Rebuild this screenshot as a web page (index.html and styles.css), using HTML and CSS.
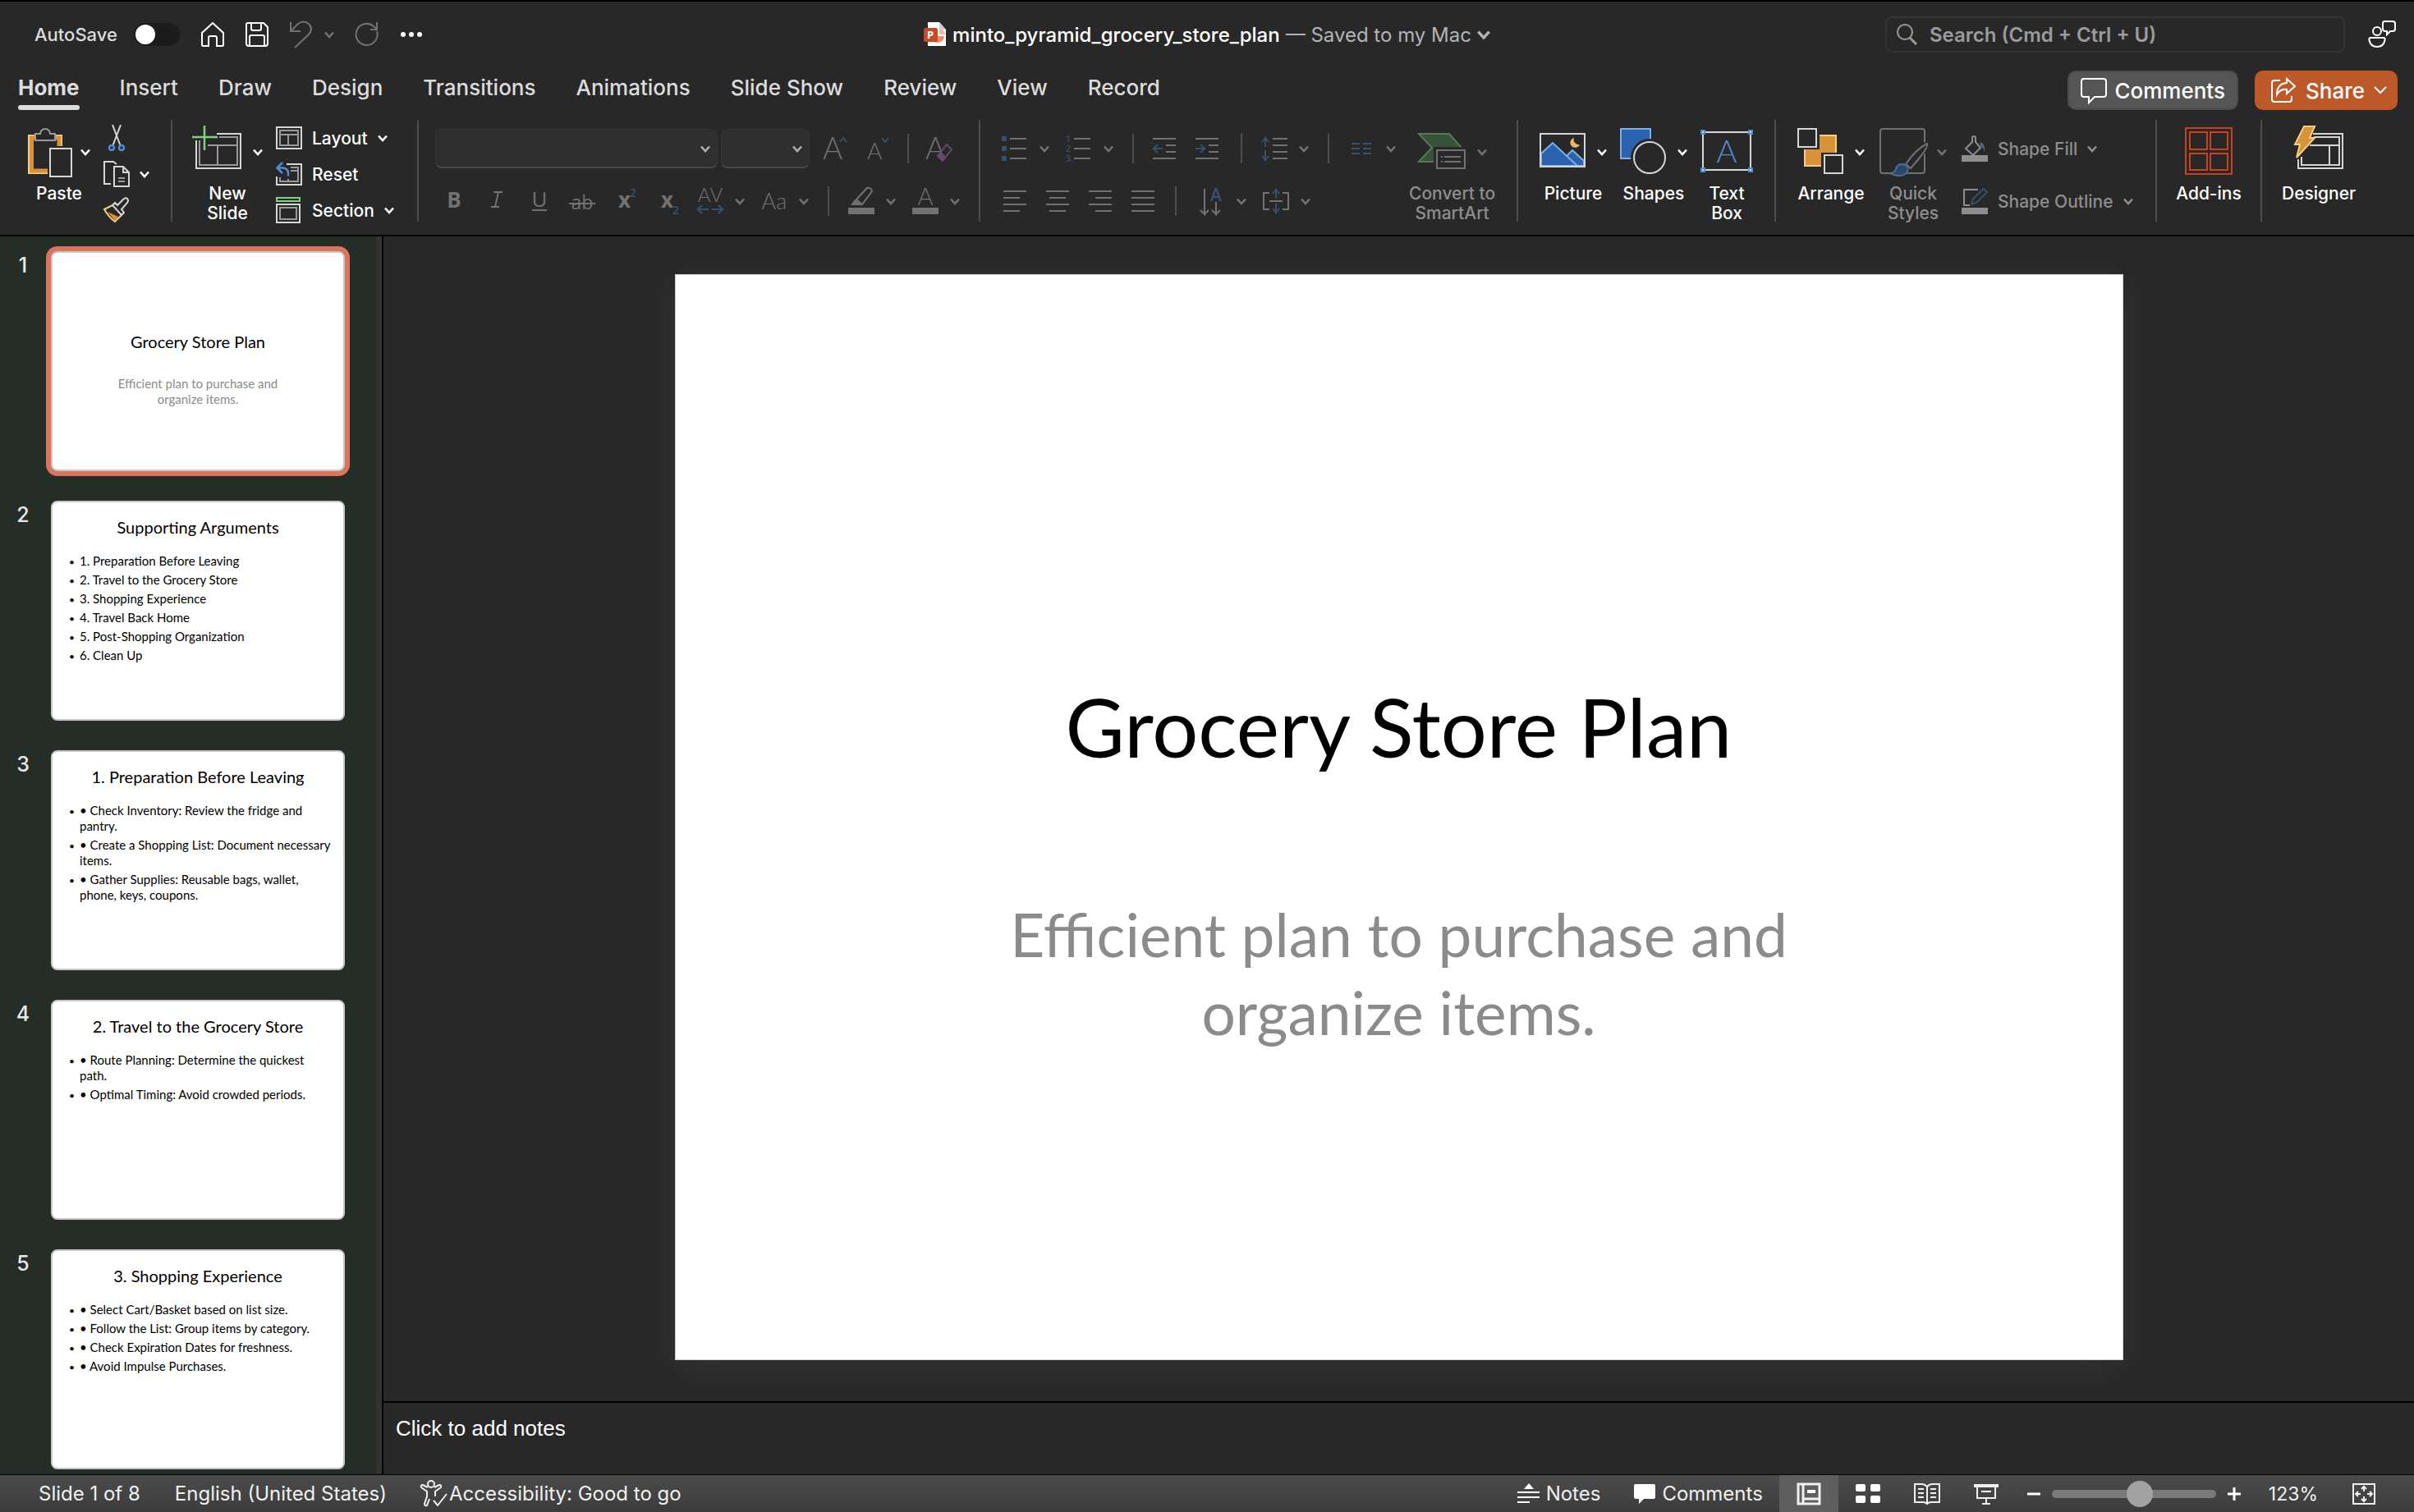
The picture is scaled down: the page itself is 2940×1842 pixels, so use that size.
FILE: index.html
```html
<!DOCTYPE html>
<html lang="en">
<head>
    <meta charset="UTF-8">
    <title>minto_pyramid_grocery_store_plan</title>
    <link rel="stylesheet" href="styles.css">
</head>
<body>

    <svg class="sprite" aria-hidden="true">
        <symbol id="chev" viewBox="0 0 12 12"><path d="M1 3.5 6 9l5-5.5" fill="none" stroke="currentColor" stroke-width="2.6"/></symbol>
    </svg>

    <header class="titlebar">
        <div class="quick">
            <label class="autosave">AutoSave <input type="checkbox" class="toggle"></label>
            <button class="plain" aria-label="Home"><svg width="28" height="32" viewBox="0 0 28 32" class="line"><path d="M14 2 27 14v14.500q0 1.500-1.500 1.500H19V20q0-2-2-2h-6q-2 0-2 2v10H2.500Q1 30 1 28.500V14z"/></svg></button>
            <button class="plain" aria-label="Save"><svg width="28" height="30" viewBox="0 0 28 30" class="line"><path d="M3 1h19l5 5v20q0 3-3 3H4q-3 0-3-3V3q0-2 2-2zM7 1v7q0 2 2 2h8q2 0 2-2V1M5 29V18q0-2 2-2h14q2 0 2 2v11"/></svg></button>
            <div class="split dim">
                <button class="plain" aria-label="Undo"><svg width="28" height="34" viewBox="0 0 28 34" class="line"><path d="M1 2v11h12M1 13 10 4q7-5 13 0 6 6 0 13L6 33"/></svg></button>
                <button class="plain" aria-label="Undo list"><svg width="12" height="12"><use href="#chev"/></svg></button>
            </div>
            <button class="plain dim" aria-label="Redo"><svg width="28" height="32" viewBox="0 0 28 32" class="line"><path d="M26 12a13 13 0 1 1-4-6l4 3M26 1v9h-8"/></svg></button>
            <button class="plain" aria-label="More"><svg width="28" height="8" viewBox="0 0 28 8" fill="#fff"><circle cx="4" cy="4" r="3"/><circle cx="14" cy="4" r="3"/><circle cx="24" cy="4" r="3"/></svg></button>
        </div>
        <div class="doc-title">
            <svg width="28" height="32" viewBox="0 0 28 32"><path d="M5 1h14l8 9v20H5z" fill="#fff"/><path d="M19 1v9h8z" fill="#ccc"/><path d="M17 10a8 8 0 1 0 8 8h-8z" fill="#e98a6b"/><path d="M19 9a7 7 0 0 1 7 7h-7z" fill="#f6bda6"/><rect y="8" width="17" height="17" rx="2" fill="#c44a28"/><text x="4" y="21" font-size="13" font-weight="700" class="badge">P</text></svg>
            <h1>minto_pyramid_grocery_store_plan</h1>
            <span class="saved">— Saved to my Mac</span>
            <svg class="saved" width="16" height="16"><use href="#chev"/></svg>
        </div>
        <div class="title-right">
            <label class="search">
                <svg width="28" height="28" viewBox="0 0 28 28" class="line"><circle cx="12" cy="11" r="9"/><path d="m18 18 8 8" stroke-width="3"/></svg>
                <input type="text" placeholder="Search (Cmd + Ctrl + U)" aria-label="Search">
            </label>
            <button class="plain" aria-label="Presence"><svg width="34" height="34" viewBox="0 0 34 34" class="line"><circle cx="11" cy="13" r="5"/><path d="M3 21h16q2 0 1.500 3-1.500 8-9.500 8t-9.500-8Q1 21 3 21zM20 1h10q3 0 3 3v6q0 3-3 3h-3l-4 4v-4h-2q-3 0-3-3V4q0-3 2-3z"/></svg></button>
        </div>
    </header>

    <div class="tab-row">
        <nav class="tabs">
            <a href="#" class="tab active">Home</a>
            <a href="#" class="tab">Insert</a>
            <a href="#" class="tab">Draw</a>
            <a href="#" class="tab">Design</a>
            <a href="#" class="tab">Transitions</a>
            <a href="#" class="tab">Animations</a>
            <a href="#" class="tab">Slide Show</a>
            <a href="#" class="tab">Review</a>
            <a href="#" class="tab">View</a>
            <a href="#" class="tab">Record</a>
        </nav>
        <div class="actions">
            <button class="btn-comments"><svg width="32" height="32" viewBox="0 0 32 32" class="line"><path d="M4 2h24q3 0 3 3v16q0 3-3 3H17l-7 7v-7H4q-3 0-3-3V5q0-3 3-3z"/></svg>Comments</button>
            <button class="btn-share"><svg width="32" height="32" viewBox="0 0 32 32" class="line"><path d="M12 4H5Q2 4 2 7v20q0 3 3 3h18q3 0 3-3v-4M20 2l10 9-10 9v-5q-8-1-12 6 0-13 12-14z"/></svg>Share <svg width="16" height="16" viewBox="0 0 16 16" class="line"><path d="m1 4 7 7 7-7"/></svg></button>
        </div>
    </div>

    <div class="ribbon">
        <!-- Clipboard -->
        <section class="group g-clipboard">
            <button class="tool">
                <span class="face">
                    <svg width="54" height="64" viewBox="0 0 54 64" fill="none"><path d="M8 12H1v46h23M34 12h7v13" stroke="#f3cf7f" stroke-width="2"/><path d="M8 15H4.500v40H24M34 15h4v10" stroke="#d8923a" stroke-width="5"/><path d="M9 10h6a6 6 0 0 1 12 0h6v8H9z" stroke="#9a9a9a" stroke-width="2" fill="#282828"/><path d="M27 28h26v34H27z" stroke="#d6d6d6" stroke-width="2"/></svg>
                    <svg width="12" height="12"><use href="#chev"/></svg>
                </span>
                <span class="label">Paste</span>
            </button>
            <div class="minis">
                <button class="mini" aria-label="Cut"><svg width="32" height="32" viewBox="0 0 32 32" fill="none"><path d="m11 0 9.500 25M21 0l-9.500 25" stroke="#d6d6d6" stroke-width="2"/><circle cx="10" cy="28" r="3" stroke="#4f8fd0" stroke-width="2.500"/><circle cx="22" cy="28" r="3" stroke="#4f8fd0" stroke-width="2.500"/></svg></button>
                <button class="mini" aria-label="Copy"><svg width="32" height="32" viewBox="0 0 32 32" fill="none" stroke="#d6d6d6" stroke-width="2"><path d="M9 28H1V1h11l4 3M13 7h11l7 7v17H13zM24 7v7h7"/><path d="M18 21h8M18 25h8" stroke="#9a9a9a"/></svg><svg width="12" height="12"><use href="#chev"/></svg></button>
                <button class="mini" aria-label="Format painter"><svg width="32" height="32" viewBox="0 0 32 32" fill="none" stroke-width="2"><path d="M11 10 1 15q5 9 13 15l8-8" stroke="#f3cf7f"/><path d="m5 18 13 6-4 5z" fill="#d8923a"/><path d="m14 7-3 3 11 12 3-3-3-4 7-8q2-3 0-5t-5 1l-7 7z" stroke="#d6d6d6"/></svg></button>
            </div>
        </section>

        <!-- Slides -->
        <section class="group g-slides">
            <button class="tool">
                <span class="face">
                    <svg width="64" height="64" viewBox="0 0 64 64" fill="none" stroke-width="2"><path d="M30 10h29v42H5V18" stroke="#d6d6d6"/><path d="M33 14h22v34H9V18M19 24h36M31 24v24" stroke="#9a9a9a"/><path d="M0 14h31M15 0v30" stroke="#7fd27f" stroke-width="2.500"/></svg>
                    <svg width="12" height="12"><use href="#chev"/></svg>
                </span>
                <span class="label">New<br>Slide</span>
            </button>
            <div class="minis">
                <button class="mini"><svg width="32" height="28" viewBox="0 0 32 28" fill="none" stroke-width="2"><path d="M1 1h30v26H1z" stroke="#d6d6d6"/><path d="M5 5h22v18H5zM5 10h22M15 10v13" stroke="#9a9a9a"/></svg>Layout<svg width="12" height="12"><use href="#chev"/></svg></button>
                <button class="mini"><svg width="32" height="28" viewBox="0 0 32 28" fill="none" stroke-width="2"><path d="M13 2h18v25H1V17" stroke="#d6d6d6"/><path d="M18 6h9v17H5v-5M18 10h9M15 20v3" stroke="#9a9a9a"/><path d="M8 0 1.500 6.500 8 13M2 6.500h7q7 1 6 10" stroke="#4f8fd0" stroke-width="2.500"/></svg>Reset</button>
                <button class="mini"><svg width="32" height="32" viewBox="0 0 32 32" fill="none" stroke-width="2"><path d="M1 1h28v4H1z" stroke="#7fd27f"/><path d="M1 9h28v22H1z" stroke="#d6d6d6"/><path d="M5 13h20v14H5z" stroke="#9a9a9a"/></svg>Section<svg width="12" height="12"><use href="#chev"/></svg></button>
            </div>
        </section>

        <!-- Font -->
        <section class="group g-font dim">
            <div class="row">
                <div class="font-pick">
                    <div class="pick pick-font"><select aria-label="Font"><option></option></select><svg width="12" height="12"><use href="#chev"/></svg></div>
                    <div class="pick pick-size"><select aria-label="Font size"><option></option></select><svg width="12" height="12"><use href="#chev"/></svg></div>
                </div>
                <button class="plain" aria-label="Grow font"><svg width="36" height="36" viewBox="0 0 36 36"><text x="0" y="31" font-size="37" class="thin">A</text><path d="m21 10 4-5 4 5" class="blue"/></svg></button>
                <button class="plain" aria-label="Shrink font"><svg width="32" height="36" viewBox="0 0 32 36"><text x="2" y="31" font-size="28" class="thin">A</text><path d="m20 5 4 5 4-5" class="blue"/></svg></button>
                <span class="bar"></span>
                <button class="plain" aria-label="Clear formatting"><svg width="36" height="36" viewBox="0 0 36 36"><text x="1" y="31" font-size="37" class="thin">A</text><path d="m16 27 11-14 6 6-11 14z" fill="#282828" stroke="#6b4670" stroke-width="2"/><path d="m16 27 4-5 6 6-4 5z" fill="#6b4670"/></svg></button>
            </div>
            <div class="row">
                <button class="plain" aria-label="Bold"><svg width="32" height="34" viewBox="0 0 32 34"><text x="16" y="25" font-size="26" font-weight="700" text-anchor="middle">B</text></svg></button>
                <button class="plain" aria-label="Italic"><svg width="32" height="34" viewBox="0 0 32 34" class="line"><path d="M12 6h11M9 24h10M18 6l-4 18"/></svg></button>
                <button class="plain" aria-label="Underline"><svg width="32" height="34" viewBox="0 0 32 34"><text x="16" y="24" font-size="26" text-anchor="middle">U</text><path d="M7 28h18" class="ink"/></svg></button>
                <button class="plain" aria-label="Strikethrough"><svg width="32" height="34" viewBox="0 0 32 34"><text x="16" y="27" font-size="23" text-anchor="middle">ab</text><path d="M0 20h32" class="ink"/></svg></button>
                <button class="plain" aria-label="Superscript"><svg width="32" height="34" viewBox="0 0 32 34"><text x="8" y="25" font-size="26" font-weight="700">x</text><text x="22" y="12" font-size="14" class="bluetext">2</text></svg></button>
                <button class="plain" aria-label="Subscript"><svg width="32" height="34" viewBox="0 0 32 34"><text x="8" y="25" font-size="26" font-weight="700">x</text><text x="22" y="33" font-size="14" class="bluetext">2</text></svg></button>
                <button class="split" aria-label="Character spacing"><svg width="32" height="34" viewBox="0 0 32 34"><text x="16" y="18" font-size="24" text-anchor="middle" class="thin">AV</text><path d="M14 27H1l5-5m-5 5 5 5M18 27h13l-5-5m5 5-5 5" class="blue"/></svg><svg width="12" height="12"><use href="#chev"/></svg></button>
                <button class="split" aria-label="Change case"><svg width="32" height="34" viewBox="0 0 32 34"><text x="16" y="27" font-size="27" text-anchor="middle" class="thin">Aa</text></svg><svg width="12" height="12"><use href="#chev"/></svg></button>
                <span class="bar"></span>
                <button class="split" aria-label="Highlight"><svg width="32" height="34" viewBox="0 0 32 34"><path d="m10 15 13-14q5-1 6 4L17 21z" fill="none" class="ink"/><path d="m8 15 9 7-6 0H3z" fill="currentColor"/><path d="M0 25h32v8H0z" fill="currentColor"/></svg><svg width="12" height="12"><use href="#chev"/></svg></button>
                <button class="split" aria-label="Font color"><svg width="32" height="34" viewBox="0 0 32 34"><text x="16" y="22" font-size="29" text-anchor="middle" class="thin">A</text><path d="M0 25h32v8H0z" fill="currentColor"/></svg><svg width="12" height="12"><use href="#chev"/></svg></button>
            </div>
        </section>

        <!-- Paragraph -->
        <section class="group g-paragraph dim">
            <div class="stack">
                <div class="row">
                    <button class="split" aria-label="Bullets"><svg width="32" height="34" viewBox="0 0 32 34"><path d="M10 5h20M10 17h20M10 29h20" class="ink"/><path d="M0 2h6v6H0zM0 14h6v6H0zM0 26h6v6H0z" fill="#35516f"/></svg><svg width="12" height="12"><use href="#chev"/></svg></button>
                    <button class="split" aria-label="Numbering"><svg width="32" height="34" viewBox="0 0 32 34"><path d="M10 5h20M10 17h20M10 29h20" class="ink"/><text x="0" y="9" font-size="11" class="bluetext">1</text><text x="0" y="21" font-size="11" class="bluetext">2</text><text x="0" y="33" font-size="11" class="bluetext">3</text></svg><svg width="12" height="12"><use href="#chev"/></svg></button>
                    <span class="bar"></span>
                    <button class="plain" aria-label="Decrease indent"><svg width="32" height="34" viewBox="0 0 32 34"><path d="M0 5h28M16 13h12M16 21h12M0 29h28" class="ink"/><path d="M12 17H1l5-5m-5 5 5 5" class="blue"/></svg></button>
                    <button class="plain" aria-label="Increase indent"><svg width="32" height="34" viewBox="0 0 32 34"><path d="M0 5h28M16 13h12M16 21h12M0 29h28" class="ink"/><path d="M0 17h11l-5-5m5 5-5 5" class="blue"/></svg></button>
                    <span class="bar"></span>
                    <button class="split" aria-label="Line spacing"><svg width="32" height="34" viewBox="0 0 32 34"><path d="M14 5h18M14 13h18M14 21h18M14 29h18" class="ink"/><path d="M5 15V4L1 9m4-5 4 5M5 19v12l-4-5m4 5 4-5" class="blue"/></svg><svg width="12" height="12"><use href="#chev"/></svg></button>
                    <span class="bar"></span>
                    <button class="split" aria-label="Columns"><svg width="32" height="34" viewBox="0 0 32 34"><path d="M4 11h10M18 11h10M4 17h10M18 17h10M4 23h10M18 23h10" class="blue"/></svg><svg width="12" height="12"><use href="#chev"/></svg></button>
                </div>
                <div class="row">
                    <button class="plain" aria-label="Align left"><svg width="32" height="34" viewBox="0 0 32 34"><path d="M2 5h28M2 13h20M2 21h28M2 29h20" class="ink"/></svg></button>
                    <button class="plain" aria-label="Center"><svg width="32" height="34" viewBox="0 0 32 34"><path d="M2 5h28M6 13h20M2 21h28M6 29h20" class="ink"/></svg></button>
                    <button class="plain" aria-label="Align right"><svg width="32" height="34" viewBox="0 0 32 34"><path d="M2 5h28M10 13h20M2 21h28M10 29h20" class="ink"/></svg></button>
                    <button class="plain" aria-label="Justify"><svg width="32" height="34" viewBox="0 0 32 34"><path d="M2 5h28M2 13h28M2 21h28M2 29h28" class="ink"/></svg></button>
                    <span class="bar"></span>
                    <button class="split" aria-label="Text direction"><svg width="36" height="34" viewBox="0 0 36 34"><path d="M11 2v31l-5-5m5 5 5-5M25 18v15l-5-5m5 5 5-5" class="ink"/><text x="25" y="17" font-size="21" text-anchor="middle" class="bluetext">A</text></svg><svg width="12" height="12"><use href="#chev"/></svg></button>
                    <button class="split" aria-label="Align text"><svg width="32" height="34" viewBox="0 0 32 34"><path d="M8 7H1v20h7M24 7h7v20h-7M8 17h16" class="ink"/><path d="M16 14V3l-4 5m4-5 4 5M16 20v11l-4-5m4 5 4-5" class="blue"/></svg><svg width="12" height="12"><use href="#chev"/></svg></button>
                </div>
            </div>
            <button class="tool tool-smart">
                <span class="face">
                    <svg width="62" height="64" viewBox="0 0 62 64"><path d="M1 10h37l15 17H20v17H1l16-17z" fill="#37523a" stroke="#557a58" stroke-width="2"/><path d="M19 26h43v30H19z" fill="#282828"/><path d="M23 30h34v22H23zM32 38h20M32 44h20M28 38h2M28 44h2" fill="none" class="ink"/></svg>
                    <svg width="12" height="12"><use href="#chev"/></svg>
                </span>
                <span class="label">Convert to<br>SmartArt</span>
            </button>
        </section>

        <!-- Insert -->
        <section class="group g-insert">
            <button class="tool">
                <span class="face">
                    <svg width="60" height="64" viewBox="0 0 60 64"><path d="m33 37 7-7 14 13v6H46zM2 34l14-13 30 28H2z" fill="#2a62ad" stroke="#7fb0e4" stroke-width="2"/><path d="M42 15a6 6 0 1 0 7 8 6 6 0 0 1-7-8z" fill="#f0b768"/><path d="M1 10h54v40H1z" fill="none" stroke="#d6d6d6" stroke-width="2"/></svg>
                    <svg width="12" height="12"><use href="#chev"/></svg>
                </span>
                <span class="label">Picture</span>
            </button>
            <button class="tool">
                <span class="face">
                    <svg width="60" height="64" viewBox="0 0 60 64"><path d="M1 4h36v36H1z" fill="#2a62ad" stroke="#7fb0e4" stroke-width="2"/><circle cx="36" cy="39" r="23" fill="#282828"/><circle cx="36" cy="39" r="19" fill="none" stroke="#d6d6d6" stroke-width="2"/></svg>
                    <svg width="12" height="12"><use href="#chev"/></svg>
                </span>
                <span class="label">Shapes</span>
            </button>
            <button class="tool">
                <span class="face">
                    <svg width="64" height="64" viewBox="0 0 64 64"><path d="M3 8h58v46H3z" fill="none" stroke="#d6d6d6" stroke-width="2"/><g fill="#d6d6d6" stroke="#4f8fd0" stroke-width="2"><path d="M1 6h4v4H1zM59 6h4v4h-4zM1 52h4v4H1zM59 52h4v4h-4z"/></g><text x="32" y="45" font-size="38" text-anchor="middle" class="boxa">A</text></svg>
                </span>
                <span class="label">Text<br>Box</span>
            </button>
        </section>

        <!-- Arrange -->
        <section class="group g-arrange">
            <button class="tool">
                <span class="face">
                    <svg width="60" height="64" viewBox="0 0 60 64"><path d="M9 12h38v37H9z" fill="#d8923a" stroke="#f3cf7f" stroke-width="2"/><path d="M0 3h27v26H0zM29 33h27v26H29z" fill="#282828"/><path d="M1 4h22v22H1zM33 36h22v22H33z" fill="none" stroke="#d6d6d6" stroke-width="2"/></svg>
                    <svg width="12" height="12"><use href="#chev"/></svg>
                </span>
                <span class="label">Arrange</span>
            </button>
            <button class="tool dim">
                <span class="face">
                    <svg width="60" height="64" viewBox="0 0 60 64"><rect x="1" y="4" width="54" height="54" rx="3" fill="none" class="ink"/><path d="M31 45 55 20l6 8-22 24-20 10-8-2z" fill="#282828"/><path d="M32 47Q44 29 58 22q3 4-20 30z" fill="none" class="ink"/><path d="M13 58q5 0 7-5 2-7 9-6 8 3 5 9-6 9-21 2z" fill="#2c4568" stroke="#4a6c92" stroke-width="2"/></svg>
                    <svg width="12" height="12"><use href="#chev"/></svg>
                </span>
                <span class="label">Quick<br>Styles</span>
            </button>
            <div class="stack dim">
                <div class="row"><button class="mini"><svg width="32" height="32" viewBox="0 0 32 32"><path d="M13 8 5 16l9 8 9-9-6-7V3q0-2-2-2t-2 2z" fill="none" class="ink"/><path d="M23 8q6 2 5 13-1-7-5-8z" fill="#4a6c92"/><path d="M0 24h32v8H0z" fill="currentColor"/></svg>Shape Fill<svg width="12" height="12"><use href="#chev"/></svg></button></div>
                <div class="row"><button class="mini"><svg width="32" height="32" viewBox="0 0 32 32"><path d="M20 2H3v19h7" fill="none" class="ink"/><path d="m12 20 2-7L27 1l4 4-13 13z" fill="none" class="blue"/><path d="M0 24h32v8H0z" fill="currentColor"/></svg>Shape Outline<svg width="12" height="12"><use href="#chev"/></svg></button></div>
            </div>
        </section>

        <section class="group g-addins">
            <button class="tool">
                <span class="face"><svg width="58" height="64" viewBox="0 0 58 64" fill="none" stroke="#c8421f" stroke-width="2"><path d="M1 3h56v56H1zM6 8h21v21H6zM31 8h21v21H31zM6 34h21v20H6zM31 34h21v20H31z"/></svg></span>
                <span class="label">Add-ins</span>
            </button>
        </section>

        <section class="group g-designer">
            <button class="tool">
                <span class="face"><svg width="60" height="64" viewBox="0 0 60 64" fill="none" stroke-width="2"><path d="M23 10h36v42H5V41M24 14h31v34H9V38M19 24h36M43 24v24" stroke="#d6d6d6"/><path d="M12 1h13l-6 14h6L3 39l4-16H1z" fill="#d8923a" stroke="#f3cf7f"/></svg></span>
                <span class="label">Designer</span>
            </button>
        </section>
    </div>

    <main class="workspace">
        <aside class="thumbs">
            <div class="thumb-row">
                <span class="num">1</span>
                <div class="thumb cover selected">
                    <h3>Grocery Store Plan</h3>
                    <p>Efficient plan to purchase and<br>organize items.</p>
                </div>
            </div>
            <div class="thumb-row">
                <span class="num">2</span>
                <div class="thumb">
                    <h3>Supporting Arguments</h3>
                    <ul>
                        <li>1. Preparation Before Leaving</li>
                        <li>2. Travel to the Grocery Store</li>
                        <li>3. Shopping Experience</li>
                        <li>4. Travel Back Home</li>
                        <li>5. Post-Shopping Organization</li>
                        <li>6. Clean Up</li>
                    </ul>
                </div>
            </div>
            <div class="thumb-row">
                <span class="num">3</span>
                <div class="thumb">
                    <h3>1. Preparation Before Leaving</h3>
                    <ul>
                        <li>• Check Inventory: Review the fridge and<br>pantry.</li>
                        <li>• Create a Shopping List: Document necessary<br>items.</li>
                        <li>• Gather Supplies: Reusable bags, wallet,<br>phone, keys, coupons.</li>
                    </ul>
                </div>
            </div>
            <div class="thumb-row">
                <span class="num">4</span>
                <div class="thumb">
                    <h3>2. Travel to the Grocery Store</h3>
                    <ul>
                        <li>• Route Planning: Determine the quickest<br>path.</li>
                        <li>• Optimal Timing: Avoid crowded periods.</li>
                    </ul>
                </div>
            </div>
            <div class="thumb-row">
                <span class="num">5</span>
                <div class="thumb">
                    <h3>3. Shopping Experience</h3>
                    <ul>
                        <li>• Select Cart/Basket based on list size.</li>
                        <li>• Follow the List: Group items by category.</li>
                        <li>• Check Expiration Dates for freshness.</li>
                        <li>• Avoid Impulse Purchases.</li>
                    </ul>
                </div>
            </div>
        </aside>

        <div class="editor">
            <div class="canvas">
                <article class="slide">
                    <h2>Grocery Store Plan</h2>
                    <p>Efficient plan to purchase and<br>organize items.</p>
                </article>
            </div>
            <textarea class="notes" placeholder="Click to add notes" aria-label="Notes"></textarea>
        </div>
    </main>

    <footer class="status">
        <span class="count">Slide 1 of 8</span>
        <button class="plain lang">English (United States)</button>
        <button class="plain access"><svg width="34" height="34" viewBox="0 0 34 34" class="line"><circle cx="14" cy="5" r="4"/><path d="M10 9 4 6Q1 6 2 9l7 5v6L6 29q0 3 3 2l3-8M18 9l6-3q3 0 2 3l-7 5v6M17 25l5 6 11-14"/></svg>Accessibility: Good to go</button>
        <div class="status-right">
            <button class="plain has-icon notes-btn"><svg width="28" height="26" viewBox="0 0 28 26" fill="#fff"><path d="m14 0 6 7H8zM0 10h27v2H0zM0 16h27v2H0zM0 22h15v2H0z"/></svg>Notes</button>
            <button class="plain has-icon comments-btn"><svg width="28" height="26" viewBox="0 0 28 26" fill="#fff"><path d="M3 1h22q2 0 2 2v14q0 2-2 2H13l-6 6v-6H3q-2 0-2-2V3q0-2 2-2z"/></svg>Comments</button>
            <div class="views">
                <button class="view on" aria-label="Normal view"><svg width="30" height="28" viewBox="0 0 30 28" class="line"><path d="M2 2h26v24H2zM8 2v24M8 20h20" stroke-width="3"/><path d="M13 9h10v4H13z" fill="#fff" stroke="none"/></svg></button>
                <button class="view" aria-label="Slide sorter"><svg width="30" height="24" viewBox="0 0 30 24" fill="#fff"><rect width="12" height="9" rx="2"/><rect x="18" width="12" height="9" rx="2"/><rect y="14" width="12" height="9" rx="2"/><rect x="18" y="14" width="12" height="9" rx="2"/></svg></button>
                <button class="view" aria-label="Reading view"><svg width="32" height="28" viewBox="0 0 32 28" class="line"><path d="M16 5q-3-3-6-3H1v22h10q3 0 5 2 2-2 5-2h10V2h-9q-3 0-6 3zv20M5 8h7M5 13h7M5 18h7M20 8h7M20 13h7M20 18h7"/></svg></button>
                <button class="view" aria-label="Slide show"><svg width="30" height="28" viewBox="0 0 30 28" class="line"><path d="M0 4h30" stroke-width="4"/><path d="M4 5v14h22V5M9 11h12M15 19v6M10 26h10"/></svg></button>
            </div>
            <div class="zoom">
                <button class="plain" aria-label="Zoom out"><svg width="16" height="18" viewBox="0 0 16 18"><path d="M0 9h16" stroke="#fff" stroke-width="3"/></svg></button>
                <input type="range" min="0" max="100" value="54" aria-label="Zoom">
                <button class="plain" aria-label="Zoom in"><svg width="16" height="18" viewBox="0 0 16 18"><path d="M0 9h16M8 1v16" stroke="#fff" stroke-width="3"/></svg></button>
            </div>
            <span class="percent">123%</span>
            <button class="plain" aria-label="Fit slide to window"><svg width="28" height="28" viewBox="0 0 28 28" class="line"><path d="M1 2h26v24H1z"/><path d="M14 5v6M14 23v-6M4 14h6M24 14h-6M11 8l3-3 3 3M11 20l3 3 3-3M7 11l-3 3 3 3M21 11l3 3-3 3"/></svg></button>
        </div>
    </footer>
</body>
</html>
```

FILE: styles.css
```css
* {
    box-sizing: border-box;
}

body {
    margin: 0;
    height: 100vh;
    display: flex;
    flex-direction: column;
    overflow: hidden;
    background-color: #282828;
    border-top: 2px solid #000;
    color: #fff;
    font-family: Inter, sans-serif;
    font-size: 21px;
    font-weight: 500;
}

button {
    font: inherit;
    color: inherit;
    background: none;
    border: none;
    padding: 0;
}

input, select, textarea {
    font: inherit;
    color: inherit;
    margin: 0;
}

svg {
    display: block;
    flex: none;
    overflow: visible;
}

svg text {
    fill: currentColor;
    font-family: "Open Sans", sans-serif;
}

svg .badge {
    fill: #fff;
}

.sprite {
    position: absolute;
    width: 0;
    height: 0;
}

.line {
    fill: none;
    stroke: currentColor;
    stroke-width: 2;
}

.ink {
    stroke: currentColor;
    stroke-width: 2;
    fill: none;
}

.blue {
    stroke: #35516f;
    stroke-width: 2;
    fill: none;
}

svg .bluetext {
    fill: #35516f;
    font-weight: 600;
}

svg .thin {
    font-family: Lato, sans-serif;
    font-weight: 300;
}

svg .boxa {
    fill: #4f8fd0;
    font-family: Lato, sans-serif;
    font-weight: 300;
}

.dim {
    color: #727272;
}

.plain {
    display: flex;
    align-items: center;
}

.split {
    display: flex;
    align-items: center;
    gap: 14px;
}

/* title bar */

.titlebar {
    display: grid;
    grid-template-columns: 1fr auto 1fr;
    align-items: center;
    height: 80px;
    padding: 0 22px 0 42px;
}

.quick {
    display: flex;
    align-items: center;
    gap: 26px;
}

.autosave {
    display: flex;
    align-items: center;
    gap: 20px;
    font-size: 22px;
    color: #dcdcdc;
}

.toggle {
    appearance: none;
    width: 56px;
    height: 28px;
    padding: 2px;
    border-radius: 14px;
    background-color: #1c1c1c;
}

.toggle::before {
    content: "";
    display: block;
    width: 24px;
    height: 24px;
    border-radius: 50%;
    background-color: #fff;
}

.doc-title {
    display: flex;
    align-items: center;
    gap: 7px;
    font-size: 24px;
    padding-right: 20px;
}

.doc-title h1 {
    margin: 0;
    font-size: 24px;
    font-weight: 500;
}

.saved {
    color: #b4b4b4;
    font-weight: 400;
}

.title-right {
    display: flex;
    align-items: center;
    justify-content: flex-end;
    gap: 28px;
}

.search {
    display: flex;
    align-items: center;
    gap: 14px;
    width: 560px;
    height: 44px;
    padding: 0 10px;
    border: 2px solid #333;
    border-radius: 8px;
    color: #9b9b9b;
}

.search input {
    flex: 1;
    border: none;
    outline: none;
    background: none;
    padding: 0;
    font-size: 24px;
    font-weight: 600;
}

.search input::placeholder {
    color: #9b9b9b;
}

/* tabs */

.tab-row {
    display: flex;
    justify-content: space-between;
    margin: 4px 20px 12px 22px;
}

.tabs {
    display: flex;
    gap: 49px;
}

.tab {
    color: #dcdcdc;
    text-decoration: none;
    font-size: 26px;
    line-height: 42px;
    border-bottom: 6px solid transparent;
}

.tab.active {
    font-weight: 700;
    position: relative;
}

.tab.active::after {
    content: "";
    position: absolute;
    left: 0;
    right: 0;
    bottom: -6px;
    height: 6px;
    border-radius: 3px;
    background-color: #dcdcdc;
}

.actions {
    display: flex;
    gap: 20px;
}

.btn-comments, .btn-share {
    display: flex;
    align-items: center;
    height: 48px;
    gap: 9px;
    padding: 0 14px;
    border-radius: 10px;
    font-size: 26px;
}

.btn-comments {
    background-color: #555;
    border: 2px solid #4b4b4b;
}

.btn-share {
    padding: 0 13px 0 19px;
    gap: 11px;
    background-color: #bd5828;
}

/* ribbon */

.ribbon {
    display: flex;
    flex: none;
    padding-bottom: 16px;
    border-bottom: 2px solid #000;
}

.group {
    display: flex;
    flex: none;
    gap: 16px;
    height: 124px;
    border-right: 2px solid #4d4d4d;
}

.g-clipboard { width: 210px; padding-left: 34px; }
.g-slides { width: 300px; padding-left: 24px; }
.g-font { width: 684px; padding: 10px 0 0 20px; flex-direction: column; gap: 14px; }
.g-paragraph { width: 655px; padding-left: 26px; }
.g-insert { width: 314px; padding-left: 26px; }
.g-arrange { width: 464px; padding-left: 26px; gap: 18px; }
.g-addins { width: 128px; justify-content: center; }
.g-designer { flex: 1; padding-left: 24px; border-right: none; }

.tool {
    display: flex;
    flex-direction: column;
    align-items: center;
    height: 128px;
}

.tool-smart {
    margin-left: auto;
    margin-right: 26px;
}

.face {
    display: flex;
    align-items: center;
    gap: 10px;
    height: 78px;
}

.label {
    line-height: 24px;
    white-space: nowrap;
}

.dim .label, .tool.dim .label, .stack.dim .mini {
    color: #8e8e8e;
}

.minis {
    display: flex;
    flex-direction: column;
}

.mini {
    display: flex;
    flex: none;
    align-items: center;
    gap: 12px;
    height: 44px;
    white-space: nowrap;
}

.stack {
    display: flex;
    flex-direction: column;
    gap: 14px;
    padding-top: 10px;
}

.row {
    display: flex;
    flex: none;
    align-items: center;
    gap: 20px;
    height: 50px;
}

.g-font > .row:first-child {
    gap: 16px;
}

.g-font > .row:last-child {
    padding-left: 7px;
}

.bar {
    width: 2px;
    height: 36px;
    margin: 0 3px;
    background-color: #4d4d4d;
}

.font-pick {
    display: flex;
    gap: 4px;
}

.pick {
    position: relative;
}

.pick select {
    appearance: none;
    width: 100%;
    height: 48px;
    border: 1px solid #363636;
    border-bottom: 2px solid #484848;
    border-radius: 8px;
    background-color: #2e2e2e;
}

.pick svg {
    position: absolute;
    right: 9px;
    top: 18px;
    color: #b0b0b0;
}

.pick-font { width: 344px; }
.pick-size { width: 108px; }

/* slide list */

.workspace {
    display: flex;
    flex: 1;
    min-height: 0;
}

.thumbs {
    display: flex;
    flex-direction: column;
    gap: 36px;
    width: 467px;
    flex: none;
    padding-top: 18px;
    background-color: #252d27;
    border-right: 2px solid #000;
    box-shadow: inset -7px 0 0 #333;
    overflow: hidden;
}

.thumb-row {
    display: flex;
    flex: none;
}

.num {
    width: 62px;
    padding-right: 6px;
    line-height: 34px;
    text-align: center;
    font-size: 25px;
    color: #e8e8e8;
}

.thumb {
    width: 358px;
    height: 268px;
    padding: 16px 12px 0 20px;
    border: 2px solid #c8c8c8;
    border-radius: 8px;
    background-color: #fff;
    color: #000;
    font-family: Lato, sans-serif;
    font-weight: 400;
}

.thumb.selected {
    box-shadow: 0 0 0 6px #d9745f;
}

.thumb h3 {
    margin: 0 8px 0 0;
    text-align: center;
    font-size: 20px;
    line-height: 28px;
    font-weight: 400;
}

.thumb ul {
    margin: 18px 0 0;
    padding: 0 0 0 13px;
    font-size: 15px;
    line-height: 19px;
    list-style: none;
}

.thumb li {
    margin-bottom: 4px;
    white-space: nowrap;
}

.thumb li::before {
    content: "•";
    display: inline-block;
    width: 13px;
    margin-left: -13px;
    font-size: 12px;
    line-height: 12px;
}

.thumb.cover {
    padding: 94px 0 0;
    text-align: center;
}

.thumb.cover h3 {
    margin: 0;
}

.thumb p {
    margin: 28px 0 0;
    font-size: 15px;
    line-height: 19px;
    color: #8b8b8b;
}

/* editor */

.editor {
    display: flex;
    flex-direction: column;
    flex: 1;
    min-width: 0;
}

.canvas {
    flex: 1;
    display: flex;
    justify-content: center;
    align-items: center;
    min-height: 0;
    padding-bottom: 4px;
}

.slide {
    height: 1323px;
    max-height: 94%;
    aspect-ratio: 4 / 3;
    padding-top: 490px;
    border: 1px solid #d0d0d0;
    background-color: #fff;
    box-shadow: 0 8px 50px rgba(255, 255, 255, 0.06);
    text-align: center;
    font-family: Lato, sans-serif;
    font-weight: 400;
}

.slide h2 {
    margin: 0;
    font-size: 99px;
    line-height: 120px;
    font-weight: 400;
    color: #000;
}

.slide p {
    margin: 146px 0 0;
    font-size: 73px;
    line-height: 95px;
    color: #8b8b8b;
}

.notes {
    display: block;
    width: 100%;
    height: 89px;
    resize: none;
    padding: 15px;
    border: none;
    border-top: 2px solid #000;
    outline: none;
    background: none;
    font-family: "Liberation Sans", sans-serif;
    font-size: 26px;
    line-height: 32px;
    font-weight: 400;
}

.notes::placeholder {
    color: #fff;
}

/* status bar */

.status {
    display: flex;
    align-items: center;
    height: 46px;
    padding: 0 47px;
    border-top: 1px solid #000;
    background-image: linear-gradient(#4b4b4b, #3c3c3c);
    font-size: 24px;
    font-weight: 400;
    color: #f0f0f0;
    white-space: nowrap;
}

.lang {
    margin-left: 42px;
}

.access {
    margin-left: 40px;
    gap: 2px;
}

.status-right {
    display: flex;
    align-items: center;
    margin-left: auto;
}

.has-icon {
    gap: 7px;
}

.comments-btn {
    margin-left: 40px;
}

.views {
    display: flex;
    margin: 0 14px 0 20px;
}

.view {
    display: flex;
    align-items: center;
    justify-content: center;
    width: 72px;
    height: 45px;
}

.view.on {
    background-color: #5e5e5e;
}

.zoom {
    display: flex;
    align-items: center;
    gap: 14px;
}

.zoom input {
    appearance: none;
    width: 200px;
    height: 10px;
    border-radius: 5px;
    background-color: #7a7a7a;
}

.zoom input::-webkit-slider-thumb {
    appearance: none;
    width: 32px;
    height: 32px;
    border-radius: 50%;
    background-color: #a2a2a2;
}

.percent {
    margin: 0 42px 0 34px;
    font-size: 23px;
}
```
